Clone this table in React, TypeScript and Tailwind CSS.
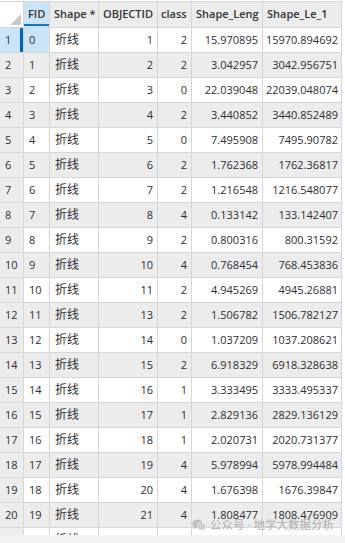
import React from "react";

const rows: [string, string, string, string, string][] = [
  ["0", "1", "2", "15.970895", "15970.894692"],
  ["1", "2", "2", "3.042957", "3042.956751"],
  ["2", "3", "0", "22.039048", "22039.048074"],
  ["3", "4", "2", "3.440852", "3440.852489"],
  ["4", "5", "0", "7.495908", "7495.90782"],
  ["5", "6", "2", "1.762368", "1762.36817"],
  ["6", "7", "2", "1.216548", "1216.548077"],
  ["7", "8", "4", "0.133142", "133.142407"],
  ["8", "9", "2", "0.800316", "800.31592"],
  ["9", "10", "4", "0.768454", "768.453836"],
  ["10", "11", "2", "4.945269", "4945.26881"],
  ["11", "13", "2", "1.506782", "1506.782127"],
  ["12", "14", "0", "1.037209", "1037.208621"],
  ["13", "15", "2", "6.918329", "6918.328638"],
  ["14", "16", "1", "3.333495", "3333.495337"],
  ["15", "17", "1", "2.829136", "2829.136129"],
  ["16", "18", "1", "2.020731", "2020.731377"],
  ["17", "19", "4", "5.978994", "5978.994484"],
  ["18", "20", "4", "1.676398", "1676.39847"],
  ["19", "21", "4", "1.808477", "1808.476909"],
  ["20", "22", "2", "2.113705", "2113.704588"],
];

const grid = "grid grid-cols-[24px_26px_49px_59px_34px_71px_79px]";
const cell = "h-full flex items-center border-r border-b border-[#d6d6d6] overflow-hidden whitespace-nowrap";

function WeChatIcon() {
  return (
    <svg width="14" height="12" viewBox="0 0 28 24">
      <ellipse cx="10.5" cy="9.5" rx="10" ry="8.5" fill="#b5b5b5" />
      <path d="M4 16 L3 20.5 L8 17.5 Z" fill="#b5b5b5" />
      <ellipse cx="19" cy="15" rx="8.5" ry="7" fill="#c8c8c8" stroke="#fff" strokeWidth="1.2" />
      <path d="M24 20 L25.5 23.5 L21 21.5 Z" fill="#c8c8c8" />
      <circle cx="7" cy="7.5" r="1.3" fill="#fff" />
      <circle cx="13.5" cy="7.5" r="1.3" fill="#fff" />
      <circle cx="16.5" cy="13.5" r="1.1" fill="#fff" />
      <circle cx="21.5" cy="13.5" r="1.1" fill="#fff" />
    </svg>
  );
}

export default function App() {
  return (
    <div
      className="relative w-[345px] h-[543px] bg-white flex flex-col overflow-hidden text-[11px] text-[#2e2e33]"
      style={{ fontFamily: '"Open Sans", "Noto Sans CJK SC", sans-serif' }}
    >
      <div className="h-[535px] shrink-0 overflow-hidden pt-[1px] w-[342px]">
        <div className="border-t border-[#d6d6d6]" />
        {/* header */}
        <div className={`${grid} h-[26px] font-semibold text-[#333338]`}>
          <div className={`${cell} bg-white justify-end items-end pr-[2px] pb-[2px]`}>
            <svg width="11" height="11" viewBox="0 0 11 11">
              <polygon points="11,0 11,11 0,11" fill="#c9c9c9" />
            </svg>
          </div>
          <div className={`${cell} relative bg-[#cce4f7] pl-[4px]`}>
            FID
            <div className="absolute left-0 right-0 bottom-[1px] h-[2px] bg-[#0078d4]" />
          </div>
          <div className={`${cell} bg-[#ececec] pl-[4px]`}>Shape *</div>
          <div className={`${cell} bg-[#ececec] pl-[4px]`}>OBJECTID</div>
          <div className={`${cell} bg-[#ececec] pl-[3px]`}>class</div>
          <div className={`${cell} bg-[#ececec] pl-[4px]`}>Shape_Leng</div>
          <div className={`${cell} bg-[#ececec] pl-[4px]`}>Shape_Le_1</div>
        </div>
        {rows.map((r, i) => {
          const first = i === 0;
          const bg = i % 2 === 1 ? "bg-[#ececec]" : "bg-white";
          return (
            <div key={i} className={`${grid} h-[25px]`}>
              <div className={`${cell} relative pl-[5px] ${first ? "bg-[#cce4f7]" : "bg-[#ececec]"}`}>
                {i + 1}
                {first && <div className="absolute right-0 top-0 bottom-0 w-[3px] bg-[#0067c0]" />}
              </div>
              <div className={`${cell} pl-[5px] ${first ? "bg-[#cce4f7]" : bg}`}>{r[0]}</div>
              <div className={`${cell} pl-[5px] text-[12px] ${bg}`}>折线</div>
              <div className={`${cell} justify-end pr-[4px] ${bg}`}>{r[1]}</div>
              <div className={`${cell} justify-end pr-[4px] ${bg}`}>{r[2]}</div>
              <div className={`${cell} justify-end pr-[4px] ${bg}`}>{r[3]}</div>
              <div className={`${cell} justify-end pr-[3px] ${bg}`}>{r[4]}</div>
            </div>
          );
        })}
      </div>
      <div className="flex-1 bg-[#f3f3f3]" />
      <div className="absolute left-[192px] top-[516px] flex items-center gap-[4px] whitespace-nowrap text-[11.5px] text-[#a8a8a8] opacity-90">
        <WeChatIcon />
        <span>公众号 · 地学大数据分析</span>
      </div>
    </div>
  );
}
